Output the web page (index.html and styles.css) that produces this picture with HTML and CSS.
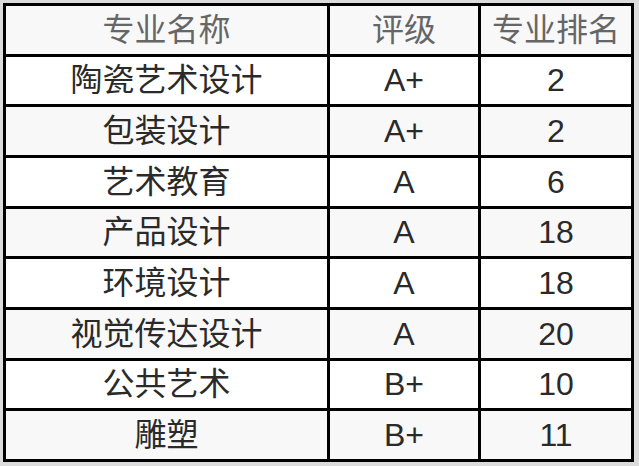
FILE: index.html
```html
<!DOCTYPE html>
<html lang="zh">
<head>
<meta charset="utf-8">
<link rel="stylesheet" href="styles.css">
</head>
<body>
<div class="table">
  <div class="cell head">专业名称</div><div class="cell head">评级</div><div class="cell head">专业排名</div>
  <div class="cell">陶瓷艺术设计</div><div class="cell">A+</div><div class="cell">2</div>
  <div class="cell alt">包装设计</div><div class="cell alt">A+</div><div class="cell alt">2</div>
  <div class="cell">艺术教育</div><div class="cell">A</div><div class="cell">6</div>
  <div class="cell alt">产品设计</div><div class="cell alt">A</div><div class="cell alt">18</div>
  <div class="cell">环境设计</div><div class="cell">A</div><div class="cell">18</div>
  <div class="cell alt">视觉传达设计</div><div class="cell alt">A</div><div class="cell alt">20</div>
  <div class="cell">公共艺术</div><div class="cell">B+</div><div class="cell">10</div>
  <div class="cell alt">雕塑</div><div class="cell alt">B+</div><div class="cell alt">11</div>
</div>
</body>
</html>
```
FILE: styles.css
```css
html, body {
  margin: 0;
  padding: 0;
  background: #dcdcdc;
  width: 639px;
  height: 466px;
  overflow: hidden;
}
body {
  padding: 3px 0 0 3px;
  box-sizing: border-box;
}
.table {
  display: grid;
  grid-template-columns: 321px 148px 150px;
  grid-template-rows: repeat(9, 1fr);
  gap: 3px;
  padding: 3px;
  background: #000;
  width: 631px;
  height: 459px;
  box-sizing: border-box;
  font-family: "Liberation Sans", "Noto Sans CJK SC", sans-serif;
  font-size: 32px;
}
.cell {
  background: #fff;
  color: #2a2a2a;
  display: flex;
  align-items: center;
  justify-content: center;
  line-height: 1;
}
.cell.alt {
  background: #f8f8f8;
}
.cell.head {
  background: #f8f8f8;
  color: #666;
}
```
